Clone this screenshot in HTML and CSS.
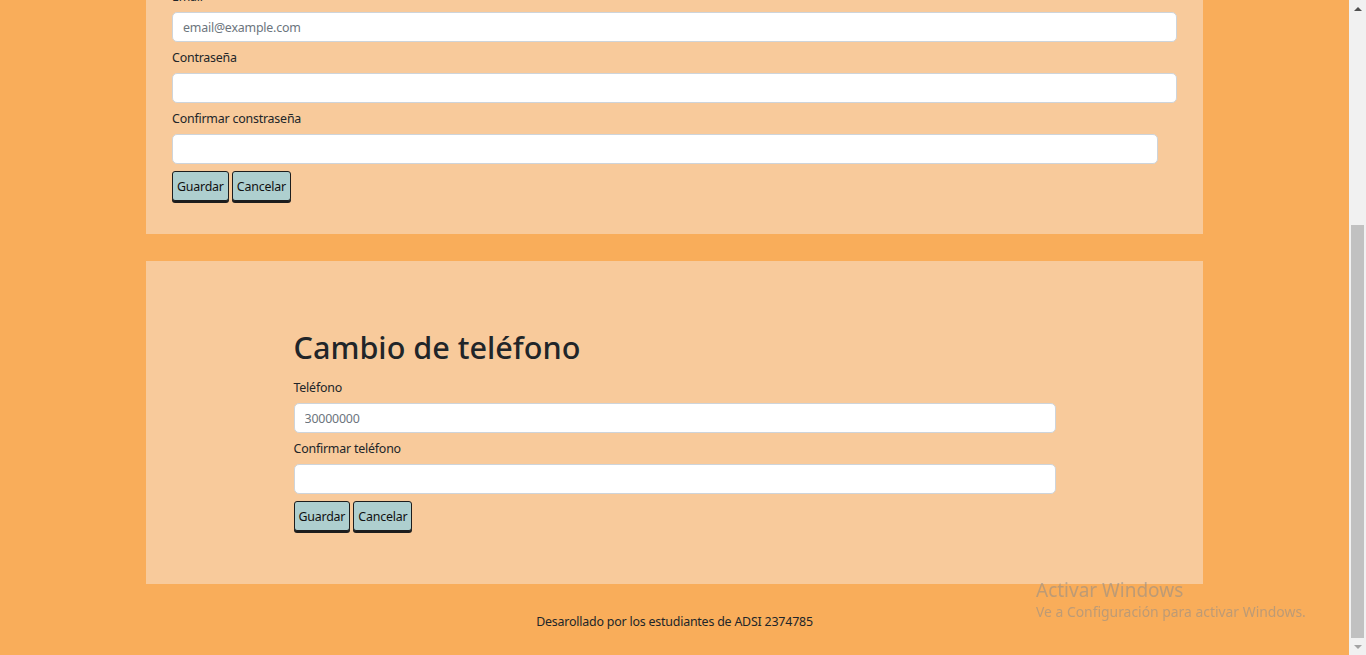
FILE: index.html
```html
<!DOCTYPE html>
<html lang="es">
<head>
<meta charset="utf-8">
<title>Perfil</title>
<link rel="stylesheet" href="styles.css">
</head>
<body>
<div class="window">
  <div class="viewport">
    <div class="page">
      <section class="card card-wide">
        <h1 class="title">Cambio de correo</h1>
        <label class="label">Email</label>
        <input class="field" type="email" placeholder="email@example.com">
        <label class="label">Contraseña</label>
        <input class="field" type="password">
        <label class="label">Confirmar constraseña</label>
        <input class="field field-short" type="password">
        <div class="actions">
          <button class="btn" type="button">Guardar</button>
          <button class="btn" type="button">Cancelar</button>
        </div>
      </section>

      <section class="card card-narrow">
        <div class="inner">
          <h1 class="title">Cambio de teléfono</h1>
          <label class="label">Teléfono</label>
          <input class="field" type="tel" placeholder="30000000">
          <label class="label">Confirmar teléfono</label>
          <input class="field" type="tel">
          <div class="actions">
            <button class="btn" type="button">Guardar</button>
            <button class="btn" type="button">Cancelar</button>
          </div>
        </div>
      </section>

      <footer class="footer">Desarollado por los estudiantes de ADSI 2374785</footer>
    </div>
  </div>
  <div class="scrollbar">
    <div class="sb-arrow sb-up"></div>
    <div class="sb-track"><div class="sb-thumb"></div></div>
    <div class="sb-arrow sb-down"></div>
  </div>
</div>
<div class="watermark">
  <div class="wm-title">Activar Windows</div>
  <div class="wm-sub">Ve a Configuración para activar Windows.</div>
</div>
</body>
</html>
```

FILE: styles.css
```css
* { box-sizing: border-box; }

html, body {
  margin: 0;
  height: 100%;
  overflow: hidden;
}

body {
  font-family: "Noto Sans", "Open Sans", sans-serif;
  font-size: 12.4px;
  letter-spacing: -0.2px;
  color: #212529;
  background: #f9ad5a;
}

.window {
  display: flex;
  height: 655px;
}

.viewport {
  flex: 1;
  height: 655px;
  overflow: hidden;
  display: flex;
  flex-direction: column;
  justify-content: flex-end;
  background: #f9ad5a;
}

.page {
  display: flex;
  flex-direction: column;
  align-items: center;
  padding-top: 27px;
}

.card {
  width: 1057px;
  background: #f8ca9b;
  margin-bottom: 27px;
  display: flex;
  flex-direction: column;
}

.card-wide {
  padding: 40px 26px 31px;
}

.card-narrow {
  padding: 67px 0 51px;
  margin-bottom: 28px;
  align-items: center;
}

.inner {
  width: 762px;
  display: flex;
  flex-direction: column;
}

.title {
  margin: 0 0 12px;
  font-size: 30.6px;
  font-weight: 500;
  line-height: 38px;
  letter-spacing: 0;
  color: #212529;
}

.label {
  display: block;
  height: 19px;
  line-height: 19px;
  margin-bottom: 6px;
}

.field {
  display: block;
  width: 100%;
  height: 30px;
  margin: 0 0 6px;
  padding: 0 10px;
  border: 1px solid #ced4da;
  border-radius: 5px;
  background: #fff;
  font-family: inherit;
  font-size: 12.4px;
  letter-spacing: -0.2px;
  color: #212529;
}

.field::placeholder { color: #6c757d; }

.field-short { width: calc(100% - 19px); }

.actions {
  display: flex;
  gap: 3px;
  margin-top: 1px;
}

.btn {
  height: 30px;
  padding: 0 4px;
  border: 1px solid #1d1d1d;
  border-radius: 3px;
  background: #aecfcf;
  box-shadow: 0 2px 0 #1d1d1d;
  font-family: inherit;
  font-size: 12.4px;
  letter-spacing: -0.2px;
  color: #111;
  margin-bottom: 2px;
}

.footer {
  height: 19px;
  line-height: 19px;
  margin-bottom: 24px;
  text-align: center;
}

.scrollbar {
  width: 17px;
  height: 655px;
  background: #f1f1f1;
  display: flex;
  flex-direction: column;
}

.sb-arrow {
  height: 17px;
  display: flex;
  align-items: center;
  justify-content: center;
}

.sb-up::before {
  content: "";
  border-left: 4px solid transparent;
  border-right: 4px solid transparent;
  border-bottom: 4px solid #505050;
}

.sb-down::before {
  content: "";
  border-left: 4px solid transparent;
  border-right: 4px solid transparent;
  border-top: 4px solid #a3a3a3;
}

.sb-track {
  flex: 1;
  display: flex;
  flex-direction: column;
  justify-content: flex-end;
  padding: 0 2px;
}

.sb-thumb {
  height: 413px;
  background: #c1c1c1;
}

.watermark {
  position: fixed;
  left: 1036px;
  top: 578px;
  color: rgba(140, 140, 140, 0.55);
  font-family: "Noto Sans", "Open Sans", sans-serif;
  letter-spacing: 0;
  pointer-events: none;
}

.wm-title {
  font-size: 19px;
  line-height: 24px;
}

.wm-sub {
  font-size: 13.9px;
  line-height: 20px;
}
```
